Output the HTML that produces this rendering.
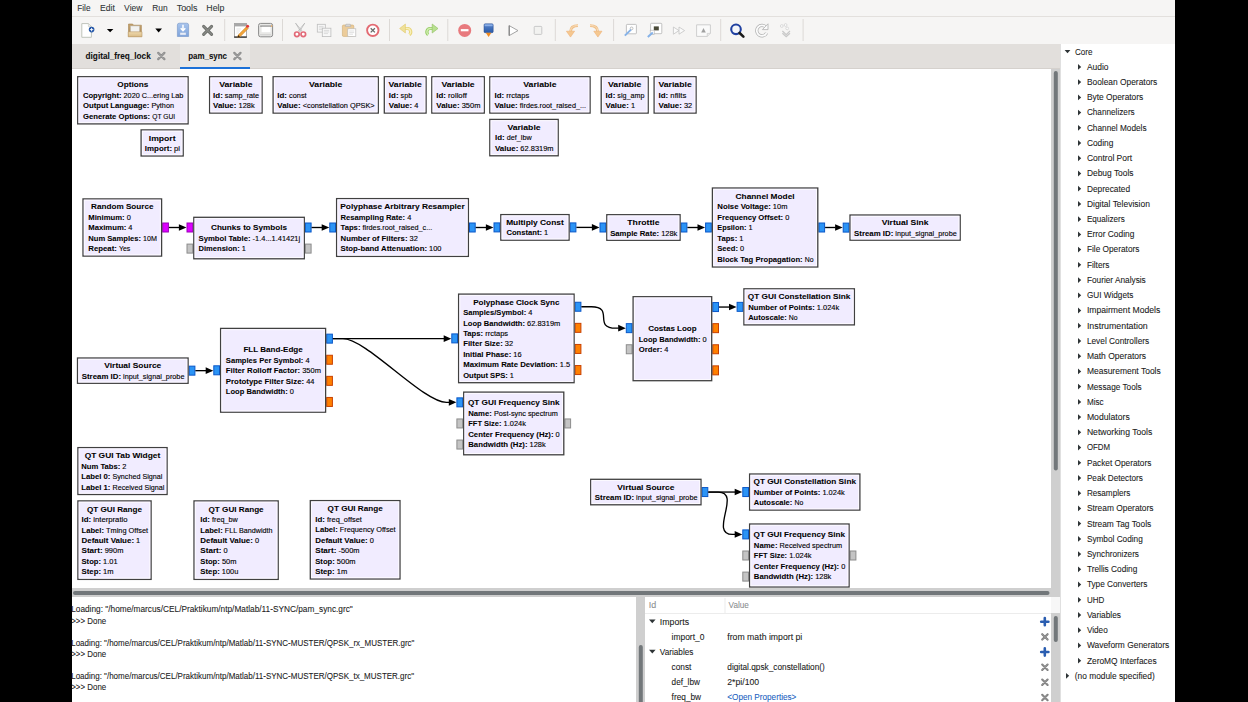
<!DOCTYPE html>
<html><head><meta charset="utf-8"><style>
html,body{margin:0;padding:0;background:#000;width:1248px;height:702px;overflow:hidden}
text{font-family:"Liberation Sans", sans-serif}
</style></head><body>
<svg width='1248' height='702' viewBox='0 0 1248 702' style='display:block;font-family:"Liberation Sans", sans-serif'>
<rect x='0' y='0' width='1248' height='702' fill='#000'/>
<rect x='72' y='0' width='1103' height='702' fill='#f6f5f4'/>
<rect x='72' y='16' width='1103' height='1' fill='#e3e0dd'/>
<text x='77.20' y='11.00' font-size='9.30' fill='#2e3436' textLength='13.27' lengthAdjust='spacingAndGlyphs' stroke='#2e3436' stroke-width='0.08'>File</text>
<text x='100.00' y='11.00' font-size='9.30' fill='#2e3436' textLength='14.86' lengthAdjust='spacingAndGlyphs' stroke='#2e3436' stroke-width='0.08'>Edit</text>
<text x='124.10' y='11.00' font-size='9.30' fill='#2e3436' textLength='18.33' lengthAdjust='spacingAndGlyphs' stroke='#2e3436' stroke-width='0.08'>View</text>
<text x='152.20' y='11.00' font-size='9.30' fill='#2e3436' textLength='15.42' lengthAdjust='spacingAndGlyphs' stroke='#2e3436' stroke-width='0.08'>Run</text>
<text x='176.70' y='11.00' font-size='9.30' fill='#2e3436' textLength='20.77' lengthAdjust='spacingAndGlyphs' stroke='#2e3436' stroke-width='0.08'>Tools</text>
<text x='206.30' y='11.00' font-size='9.30' fill='#2e3436' textLength='18.08' lengthAdjust='spacingAndGlyphs' stroke='#2e3436' stroke-width='0.08'>Help</text>
<rect x='224.2' y='19' width='1' height='22' fill='#dcd9d6'/>
<rect x='282.0' y='19' width='1' height='22' fill='#dcd9d6'/>
<rect x='389.0' y='19' width='1' height='22' fill='#dcd9d6'/>
<rect x='447.3' y='19' width='1' height='22' fill='#dcd9d6'/>
<rect x='554.8' y='19' width='1' height='22' fill='#dcd9d6'/>
<rect x='613.1' y='19' width='1' height='22' fill='#dcd9d6'/>
<rect x='720.2' y='19' width='1' height='22' fill='#dcd9d6'/>
<rect x='802.6' y='19' width='1' height='22' fill='#dcd9d6'/>
<rect x='72' y='44' width='989' height='25' fill='#e2dfdc'/>
<rect x='180' y='44' width='70' height='25' fill='#e9e7e5'/>
<rect x='72' y='68' width='989' height='1' fill='#d5d1cd'/>
<rect x='180' y='67' width='70' height='2' fill='#1c71d8'/>
<text x='85.60' y='59.00' font-size='8.96' font-weight='bold' fill='#101010' textLength='65.10' lengthAdjust='spacingAndGlyphs' stroke='#101010' stroke-width='0.08'>digital_freq_lock</text>
<text x='188.20' y='59.00' font-size='8.96' font-weight='bold' fill='#101010' textLength='38.85' lengthAdjust='spacingAndGlyphs' stroke='#101010' stroke-width='0.08'>pam_sync</text>
<path d='M158.2 52.9 L164.4 59.1 M164.4 52.9 L158.2 59.1' stroke='#8c8c8c' stroke-width='2.2' stroke-linecap='round'/>
<path d='M158.2 52.9 L164.4 59.1 M164.4 52.9 L158.2 59.1' stroke='#a8a8a8' stroke-width='0.8' stroke-linecap='round'/>
<path d='M234.3 52.9 L240.5 59.1 M240.5 52.9 L234.3 59.1' stroke='#8c8c8c' stroke-width='2.2' stroke-linecap='round'/>
<path d='M234.3 52.9 L240.5 59.1 M240.5 52.9 L234.3 59.1' stroke='#a8a8a8' stroke-width='0.8' stroke-linecap='round'/>
<rect x='72' y='69' width='979' height='519' fill='#fff'/>
<rect x='1051' y='69' width='10' height='528' fill='#cfcfcf'/>
<rect x='1053.8' y='71' width='4' height='399.5' rx='2' fill='#72777a'/>
<rect x='72' y='588' width='979' height='9' fill='#cfcfcf'/>
<rect x='73' y='591' width='976.5' height='4' rx='2' fill='#72777a'/>
<svg x='72' y='69' width='979' height='519' viewBox='72 69 979 519' overflow='hidden'><rect x='77.70' y='76.70' width='110.40' height='47.20' fill='#f1ecff' stroke='#404040' stroke-width='1.3'/>
<rect x='79.00' y='78.00' width='107.80' height='44.60' fill='none' stroke='#fdfbff' stroke-width='0.9'/>
<text x='132.90' y='87.00' font-size='7.50' font-weight='bold' text-anchor='middle' fill='#000' textLength='31.02' lengthAdjust='spacingAndGlyphs' stroke='#000' stroke-width='0.06'>Options</text>
<text x='82.96' y='98.00' font-size='7.15' font-weight='bold' fill='#000' textLength='38.55' lengthAdjust='spacingAndGlyphs' stroke='#000' stroke-width='0.06'>Copyright:</text>
<text x='123.57' y='98.00' font-size='7.15' fill='#000' textLength='59.86' lengthAdjust='spacingAndGlyphs' stroke='#000' stroke-width='0.12'>2020 C...ering Lab</text>
<text x='82.96' y='108.00' font-size='7.15' font-weight='bold' fill='#000' textLength='66.39' lengthAdjust='spacingAndGlyphs' stroke='#000' stroke-width='0.06'>Output Language:</text>
<text x='151.42' y='108.00' font-size='7.15' fill='#000' textLength='22.53' lengthAdjust='spacingAndGlyphs' stroke='#000' stroke-width='0.12'>Python</text>
<text x='82.96' y='119.00' font-size='7.15' font-weight='bold' fill='#000' textLength='67.22' lengthAdjust='spacingAndGlyphs' stroke='#000' stroke-width='0.06'>Generate Options:</text>
<text x='152.25' y='119.00' font-size='7.15' fill='#000' textLength='22.86' lengthAdjust='spacingAndGlyphs' stroke='#000' stroke-width='0.12'>QT GUI</text>
<rect x='209.60' y='76.70' width='52.50' height='36.40' fill='#f1ecff' stroke='#404040' stroke-width='1.3'/>
<rect x='210.90' y='78.00' width='49.90' height='33.80' fill='none' stroke='#fdfbff' stroke-width='0.9'/>
<text x='235.85' y='87.00' font-size='7.50' font-weight='bold' text-anchor='middle' fill='#000' textLength='33.25' lengthAdjust='spacingAndGlyphs' stroke='#000' stroke-width='0.06'>Variable</text>
<text x='213.14' y='98.00' font-size='7.15' font-weight='bold' fill='#000' textLength='9.67' lengthAdjust='spacingAndGlyphs' stroke='#000' stroke-width='0.06'>Id:</text>
<text x='224.88' y='98.00' font-size='7.15' fill='#000' textLength='34.28' lengthAdjust='spacingAndGlyphs' stroke='#000' stroke-width='0.12'>samp_rate</text>
<text x='213.14' y='108.00' font-size='7.15' font-weight='bold' fill='#000' textLength='23.28' lengthAdjust='spacingAndGlyphs' stroke='#000' stroke-width='0.06'>Value:</text>
<text x='238.49' y='108.00' font-size='7.15' fill='#000' textLength='16.17' lengthAdjust='spacingAndGlyphs' stroke='#000' stroke-width='0.12'>128k</text>
<rect x='273.10' y='76.70' width='105.20' height='36.40' fill='#f1ecff' stroke='#404040' stroke-width='1.3'/>
<rect x='274.40' y='78.00' width='102.60' height='33.80' fill='none' stroke='#fdfbff' stroke-width='0.9'/>
<text x='325.70' y='87.00' font-size='7.50' font-weight='bold' text-anchor='middle' fill='#000' textLength='33.25' lengthAdjust='spacingAndGlyphs' stroke='#000' stroke-width='0.06'>Variable</text>
<text x='277.31' y='98.00' font-size='7.15' font-weight='bold' fill='#000' textLength='9.67' lengthAdjust='spacingAndGlyphs' stroke='#000' stroke-width='0.06'>Id:</text>
<text x='289.05' y='98.00' font-size='7.15' fill='#000' textLength='17.61' lengthAdjust='spacingAndGlyphs' stroke='#000' stroke-width='0.12'>const</text>
<text x='277.31' y='108.00' font-size='7.15' font-weight='bold' fill='#000' textLength='23.28' lengthAdjust='spacingAndGlyphs' stroke='#000' stroke-width='0.06'>Value:</text>
<text x='302.66' y='108.00' font-size='7.15' fill='#000' textLength='72.03' lengthAdjust='spacingAndGlyphs' stroke='#000' stroke-width='0.12'>&lt;constellation QPSK&gt;</text>
<rect x='384.30' y='76.70' width='41.80' height='36.40' fill='#f1ecff' stroke='#404040' stroke-width='1.3'/>
<rect x='385.60' y='78.00' width='39.20' height='33.80' fill='none' stroke='#fdfbff' stroke-width='0.9'/>
<text x='405.20' y='87.00' font-size='7.50' font-weight='bold' text-anchor='middle' fill='#000' textLength='33.25' lengthAdjust='spacingAndGlyphs' stroke='#000' stroke-width='0.06'>Variable</text>
<text x='388.88' y='98.00' font-size='7.15' font-weight='bold' fill='#000' textLength='9.67' lengthAdjust='spacingAndGlyphs' stroke='#000' stroke-width='0.06'>Id:</text>
<text x='400.61' y='98.00' font-size='7.15' fill='#000' textLength='11.64' lengthAdjust='spacingAndGlyphs' stroke='#000' stroke-width='0.12'>spb</text>
<text x='388.88' y='108.00' font-size='7.15' font-weight='bold' fill='#000' textLength='23.28' lengthAdjust='spacingAndGlyphs' stroke='#000' stroke-width='0.06'>Value:</text>
<text x='414.22' y='108.00' font-size='7.15' fill='#000' textLength='4.14' lengthAdjust='spacingAndGlyphs' stroke='#000' stroke-width='0.12'>4</text>
<rect x='431.80' y='76.70' width='52.50' height='36.40' fill='#f1ecff' stroke='#404040' stroke-width='1.3'/>
<rect x='433.10' y='78.00' width='49.90' height='33.80' fill='none' stroke='#fdfbff' stroke-width='0.9'/>
<text x='458.05' y='87.00' font-size='7.50' font-weight='bold' text-anchor='middle' fill='#000' textLength='33.25' lengthAdjust='spacingAndGlyphs' stroke='#000' stroke-width='0.06'>Variable</text>
<text x='436.31' y='98.00' font-size='7.15' font-weight='bold' fill='#000' textLength='9.67' lengthAdjust='spacingAndGlyphs' stroke='#000' stroke-width='0.06'>Id:</text>
<text x='448.04' y='98.00' font-size='7.15' fill='#000' textLength='18.81' lengthAdjust='spacingAndGlyphs' stroke='#000' stroke-width='0.12'>rolloff</text>
<text x='436.31' y='108.00' font-size='7.15' font-weight='bold' fill='#000' textLength='23.28' lengthAdjust='spacingAndGlyphs' stroke='#000' stroke-width='0.06'>Value:</text>
<text x='461.65' y='108.00' font-size='7.15' fill='#000' textLength='18.74' lengthAdjust='spacingAndGlyphs' stroke='#000' stroke-width='0.12'>350m</text>
<rect x='489.80' y='76.70' width='100.30' height='36.40' fill='#f1ecff' stroke='#404040' stroke-width='1.3'/>
<rect x='491.10' y='78.00' width='97.70' height='33.80' fill='none' stroke='#fdfbff' stroke-width='0.9'/>
<text x='539.95' y='87.00' font-size='7.50' font-weight='bold' text-anchor='middle' fill='#000' textLength='33.25' lengthAdjust='spacingAndGlyphs' stroke='#000' stroke-width='0.06'>Variable</text>
<text x='494.48' y='98.00' font-size='7.15' font-weight='bold' fill='#000' textLength='9.67' lengthAdjust='spacingAndGlyphs' stroke='#000' stroke-width='0.06'>Id:</text>
<text x='506.22' y='98.00' font-size='7.15' fill='#000' textLength='22.96' lengthAdjust='spacingAndGlyphs' stroke='#000' stroke-width='0.12'>rrctaps</text>
<text x='494.48' y='108.00' font-size='7.15' font-weight='bold' fill='#000' textLength='23.28' lengthAdjust='spacingAndGlyphs' stroke='#000' stroke-width='0.06'>Value:</text>
<text x='519.83' y='108.00' font-size='7.15' fill='#000' textLength='66.19' lengthAdjust='spacingAndGlyphs' stroke='#000' stroke-width='0.12'>firdes.root_raised_...</text>
<rect x='601.20' y='76.70' width='47.00' height='36.40' fill='#f1ecff' stroke='#404040' stroke-width='1.3'/>
<rect x='602.50' y='78.00' width='44.40' height='33.80' fill='none' stroke='#fdfbff' stroke-width='0.9'/>
<text x='624.70' y='87.00' font-size='7.50' font-weight='bold' text-anchor='middle' fill='#000' textLength='33.25' lengthAdjust='spacingAndGlyphs' stroke='#000' stroke-width='0.06'>Variable</text>
<text x='605.63' y='98.00' font-size='7.15' font-weight='bold' fill='#000' textLength='9.67' lengthAdjust='spacingAndGlyphs' stroke='#000' stroke-width='0.06'>Id:</text>
<text x='617.36' y='98.00' font-size='7.15' fill='#000' textLength='27.01' lengthAdjust='spacingAndGlyphs' stroke='#000' stroke-width='0.12'>sig_amp</text>
<text x='605.63' y='108.00' font-size='7.15' font-weight='bold' fill='#000' textLength='23.28' lengthAdjust='spacingAndGlyphs' stroke='#000' stroke-width='0.06'>Value:</text>
<text x='630.97' y='108.00' font-size='7.15' fill='#000' textLength='4.14' lengthAdjust='spacingAndGlyphs' stroke='#000' stroke-width='0.12'>1</text>
<rect x='654.10' y='76.70' width='42.00' height='36.40' fill='#f1ecff' stroke='#404040' stroke-width='1.3'/>
<rect x='655.40' y='78.00' width='39.40' height='33.80' fill='none' stroke='#fdfbff' stroke-width='0.9'/>
<text x='675.10' y='87.00' font-size='7.50' font-weight='bold' text-anchor='middle' fill='#000' textLength='33.25' lengthAdjust='spacingAndGlyphs' stroke='#000' stroke-width='0.06'>Variable</text>
<text x='658.59' y='98.00' font-size='7.15' font-weight='bold' fill='#000' textLength='9.67' lengthAdjust='spacingAndGlyphs' stroke='#000' stroke-width='0.06'>Id:</text>
<text x='670.33' y='98.00' font-size='7.15' fill='#000' textLength='15.95' lengthAdjust='spacingAndGlyphs' stroke='#000' stroke-width='0.12'>nfilts</text>
<text x='658.59' y='108.00' font-size='7.15' font-weight='bold' fill='#000' textLength='23.28' lengthAdjust='spacingAndGlyphs' stroke='#000' stroke-width='0.06'>Value:</text>
<text x='683.94' y='108.00' font-size='7.15' fill='#000' textLength='8.27' lengthAdjust='spacingAndGlyphs' stroke='#000' stroke-width='0.12'>32</text>
<rect x='489.80' y='119.40' width='68.40' height='36.40' fill='#f1ecff' stroke='#404040' stroke-width='1.3'/>
<rect x='491.10' y='120.70' width='65.80' height='33.80' fill='none' stroke='#fdfbff' stroke-width='0.9'/>
<text x='524.00' y='130.00' font-size='7.50' font-weight='bold' text-anchor='middle' fill='#000' textLength='33.25' lengthAdjust='spacingAndGlyphs' stroke='#000' stroke-width='0.06'>Variable</text>
<text x='495.02' y='140.00' font-size='7.15' font-weight='bold' fill='#000' textLength='9.67' lengthAdjust='spacingAndGlyphs' stroke='#000' stroke-width='0.06'>Id:</text>
<text x='506.76' y='140.00' font-size='7.15' fill='#000' textLength='24.91' lengthAdjust='spacingAndGlyphs' stroke='#000' stroke-width='0.12'>def_lbw</text>
<text x='495.02' y='151.00' font-size='7.15' font-weight='bold' fill='#000' textLength='23.28' lengthAdjust='spacingAndGlyphs' stroke='#000' stroke-width='0.06'>Value:</text>
<text x='520.37' y='151.00' font-size='7.15' fill='#000' textLength='33.21' lengthAdjust='spacingAndGlyphs' stroke='#000' stroke-width='0.12'>62.8319m</text>
<rect x='141.10' y='129.90' width='42.10' height='26.10' fill='#f1ecff' stroke='#404040' stroke-width='1.3'/>
<rect x='142.40' y='131.20' width='39.50' height='23.50' fill='none' stroke='#fdfbff' stroke-width='0.9'/>
<text x='162.15' y='141.00' font-size='7.50' font-weight='bold' text-anchor='middle' fill='#000' textLength='26.82' lengthAdjust='spacingAndGlyphs' stroke='#000' stroke-width='0.06'>Import</text>
<text x='144.84' y='151.00' font-size='7.15' font-weight='bold' fill='#000' textLength='27.22' lengthAdjust='spacingAndGlyphs' stroke='#000' stroke-width='0.06'>Import:</text>
<text x='174.13' y='151.00' font-size='7.15' fill='#000' textLength='5.93' lengthAdjust='spacingAndGlyphs' stroke='#000' stroke-width='0.12'>pi</text>
<rect x='162.70' y='223.00' width='5.70' height='9.00' fill='#dd00ff' stroke='#9a00b8' stroke-width='1'/>
<rect x='83.00' y='198.90' width='78.60' height='57.20' fill='#f1ecff' stroke='#404040' stroke-width='1.3'/>
<rect x='84.30' y='200.20' width='76.00' height='54.60' fill='none' stroke='#fdfbff' stroke-width='0.9'/>
<text x='122.30' y='209.00' font-size='7.50' font-weight='bold' text-anchor='middle' fill='#000' textLength='62.54' lengthAdjust='spacingAndGlyphs' stroke='#000' stroke-width='0.06'>Random Source</text>
<text x='88.28' y='220.00' font-size='7.15' font-weight='bold' fill='#000' textLength='36.32' lengthAdjust='spacingAndGlyphs' stroke='#000' stroke-width='0.06'>Minimum:</text>
<text x='126.67' y='220.00' font-size='7.15' fill='#000' textLength='4.14' lengthAdjust='spacingAndGlyphs' stroke='#000' stroke-width='0.12'>0</text>
<text x='88.28' y='230.00' font-size='7.15' font-weight='bold' fill='#000' textLength='38.05' lengthAdjust='spacingAndGlyphs' stroke='#000' stroke-width='0.06'>Maximum:</text>
<text x='128.39' y='230.00' font-size='7.15' fill='#000' textLength='4.14' lengthAdjust='spacingAndGlyphs' stroke='#000' stroke-width='0.12'>4</text>
<text x='88.28' y='241.00' font-size='7.15' font-weight='bold' fill='#000' textLength='52.70' lengthAdjust='spacingAndGlyphs' stroke='#000' stroke-width='0.06'>Num Samples:</text>
<text x='143.04' y='241.00' font-size='7.15' fill='#000' textLength='13.88' lengthAdjust='spacingAndGlyphs' stroke='#000' stroke-width='0.12'>10M</text>
<text x='88.28' y='251.00' font-size='7.15' font-weight='bold' fill='#000' textLength='28.57' lengthAdjust='spacingAndGlyphs' stroke='#000' stroke-width='0.06'>Repeat:</text>
<text x='118.91' y='251.00' font-size='7.15' fill='#000' textLength='11.36' lengthAdjust='spacingAndGlyphs' stroke='#000' stroke-width='0.12'>Yes</text>
<rect x='187.00' y='223.00' width='5.70' height='9.00' fill='#dd00ff' stroke='#9a00b8' stroke-width='1'/>
<rect x='187.00' y='244.10' width='5.70' height='9.00' fill='#c4c4c4' stroke='#8c8c8c' stroke-width='1'/>
<rect x='305.40' y='223.00' width='5.70' height='9.00' fill='#2b94f5' stroke='#0b57c8' stroke-width='1'/>
<rect x='305.40' y='244.10' width='5.70' height='9.00' fill='#c4c4c4' stroke='#8c8c8c' stroke-width='1'/>
<rect x='193.80' y='217.30' width='110.50' height='41.50' fill='#f1ecff' stroke='#404040' stroke-width='1.3'/>
<rect x='195.10' y='218.60' width='107.90' height='38.90' fill='none' stroke='#fdfbff' stroke-width='0.9'/>
<text x='249.05' y='230.00' font-size='7.50' font-weight='bold' text-anchor='middle' fill='#000' textLength='76.08' lengthAdjust='spacingAndGlyphs' stroke='#000' stroke-width='0.06'>Chunks to Symbols</text>
<text x='198.53' y='241.00' font-size='7.15' font-weight='bold' fill='#000' textLength='52.01' lengthAdjust='spacingAndGlyphs' stroke='#000' stroke-width='0.06'>Symbol Table:</text>
<text x='252.60' y='241.00' font-size='7.15' fill='#000' textLength='47.57' lengthAdjust='spacingAndGlyphs' stroke='#000' stroke-width='0.12'>-1.4...1.41421j</text>
<text x='198.53' y='251.00' font-size='7.15' font-weight='bold' fill='#000' textLength='41.22' lengthAdjust='spacingAndGlyphs' stroke='#000' stroke-width='0.06'>Dimension:</text>
<text x='241.82' y='251.00' font-size='7.15' fill='#000' textLength='4.14' lengthAdjust='spacingAndGlyphs' stroke='#000' stroke-width='0.12'>1</text>
<rect x='329.80' y='223.00' width='5.70' height='9.00' fill='#2b94f5' stroke='#0b57c8' stroke-width='1'/>
<rect x='469.50' y='223.00' width='5.70' height='9.00' fill='#2b94f5' stroke='#0b57c8' stroke-width='1'/>
<rect x='336.60' y='198.60' width='131.80' height='57.80' fill='#f1ecff' stroke='#404040' stroke-width='1.3'/>
<rect x='337.90' y='199.90' width='129.20' height='55.20' fill='none' stroke='#fdfbff' stroke-width='0.9'/>
<text x='402.50' y='209.00' font-size='7.50' font-weight='bold' text-anchor='middle' fill='#000' textLength='124.56' lengthAdjust='spacingAndGlyphs' stroke='#000' stroke-width='0.06'>Polyphase Arbitrary Resampler</text>
<text x='340.52' y='220.00' font-size='7.15' font-weight='bold' fill='#000' textLength='64.60' lengthAdjust='spacingAndGlyphs' stroke='#000' stroke-width='0.06'>Resampling Rate:</text>
<text x='407.18' y='220.00' font-size='7.15' fill='#000' textLength='4.14' lengthAdjust='spacingAndGlyphs' stroke='#000' stroke-width='0.12'>4</text>
<text x='340.52' y='230.00' font-size='7.15' font-weight='bold' fill='#000' textLength='19.94' lengthAdjust='spacingAndGlyphs' stroke='#000' stroke-width='0.06'>Taps:</text>
<text x='362.53' y='230.00' font-size='7.15' fill='#000' textLength='69.76' lengthAdjust='spacingAndGlyphs' stroke='#000' stroke-width='0.12'>firdes.root_raised_c...</text>
<text x='340.52' y='241.00' font-size='7.15' font-weight='bold' fill='#000' textLength='67.01' lengthAdjust='spacingAndGlyphs' stroke='#000' stroke-width='0.06'>Number of Filters:</text>
<text x='409.60' y='241.00' font-size='7.15' fill='#000' textLength='8.27' lengthAdjust='spacingAndGlyphs' stroke='#000' stroke-width='0.12'>32</text>
<text x='340.52' y='251.00' font-size='7.15' font-weight='bold' fill='#000' textLength='86.51' lengthAdjust='spacingAndGlyphs' stroke='#000' stroke-width='0.06'>Stop-band Attenuation:</text>
<text x='429.09' y='251.00' font-size='7.15' fill='#000' textLength='12.41' lengthAdjust='spacingAndGlyphs' stroke='#000' stroke-width='0.12'>100</text>
<rect x='494.00' y='222.90' width='5.70' height='9.00' fill='#2b94f5' stroke='#0b57c8' stroke-width='1'/>
<rect x='570.20' y='222.90' width='5.70' height='9.00' fill='#2b94f5' stroke='#0b57c8' stroke-width='1'/>
<rect x='500.80' y='214.60' width='68.30' height='25.60' fill='#f1ecff' stroke='#404040' stroke-width='1.3'/>
<rect x='502.10' y='215.90' width='65.70' height='23.00' fill='none' stroke='#fdfbff' stroke-width='0.9'/>
<text x='534.95' y='225.00' font-size='7.50' font-weight='bold' text-anchor='middle' fill='#000' textLength='57.60' lengthAdjust='spacingAndGlyphs' stroke='#000' stroke-width='0.06'>Multiply Const</text>
<text x='506.45' y='235.00' font-size='7.15' font-weight='bold' fill='#000' textLength='35.56' lengthAdjust='spacingAndGlyphs' stroke='#000' stroke-width='0.06'>Constant:</text>
<text x='544.08' y='235.00' font-size='7.15' fill='#000' textLength='4.14' lengthAdjust='spacingAndGlyphs' stroke='#000' stroke-width='0.12'>1</text>
<rect x='600.00' y='223.00' width='5.70' height='9.00' fill='#2b94f5' stroke='#0b57c8' stroke-width='1'/>
<rect x='681.20' y='223.00' width='5.70' height='9.00' fill='#2b94f5' stroke='#0b57c8' stroke-width='1'/>
<rect x='606.80' y='214.70' width='73.30' height='25.60' fill='#f1ecff' stroke='#404040' stroke-width='1.3'/>
<rect x='608.10' y='216.00' width='70.70' height='23.00' fill='none' stroke='#fdfbff' stroke-width='0.9'/>
<text x='643.45' y='225.00' font-size='7.50' font-weight='bold' text-anchor='middle' fill='#000' textLength='32.22' lengthAdjust='spacingAndGlyphs' stroke='#000' stroke-width='0.06'>Throttle</text>
<text x='610.18' y='236.00' font-size='7.15' font-weight='bold' fill='#000' textLength='48.90' lengthAdjust='spacingAndGlyphs' stroke='#000' stroke-width='0.06'>Sample Rate:</text>
<text x='661.15' y='236.00' font-size='7.15' fill='#000' textLength='16.17' lengthAdjust='spacingAndGlyphs' stroke='#000' stroke-width='0.12'>128k</text>
<rect x='705.60' y='223.00' width='5.70' height='9.00' fill='#2b94f5' stroke='#0b57c8' stroke-width='1'/>
<rect x='818.90' y='223.00' width='5.70' height='9.00' fill='#2b94f5' stroke='#0b57c8' stroke-width='1'/>
<rect x='712.40' y='188.00' width='105.40' height='79.00' fill='#f1ecff' stroke='#404040' stroke-width='1.3'/>
<rect x='713.70' y='189.30' width='102.80' height='76.40' fill='none' stroke='#fdfbff' stroke-width='0.9'/>
<text x='765.10' y='199.00' font-size='7.50' font-weight='bold' text-anchor='middle' fill='#000' textLength='58.99' lengthAdjust='spacingAndGlyphs' stroke='#000' stroke-width='0.06'>Channel Model</text>
<text x='717.27' y='209.00' font-size='7.15' font-weight='bold' fill='#000' textLength='53.55' lengthAdjust='spacingAndGlyphs' stroke='#000' stroke-width='0.06'>Noise Voltage:</text>
<text x='772.88' y='209.00' font-size='7.15' fill='#000' textLength='14.60' lengthAdjust='spacingAndGlyphs' stroke='#000' stroke-width='0.12'>10m</text>
<text x='717.27' y='220.00' font-size='7.15' font-weight='bold' fill='#000' textLength='65.89' lengthAdjust='spacingAndGlyphs' stroke='#000' stroke-width='0.06'>Frequency Offset:</text>
<text x='785.22' y='220.00' font-size='7.15' fill='#000' textLength='4.14' lengthAdjust='spacingAndGlyphs' stroke='#000' stroke-width='0.12'>0</text>
<text x='717.27' y='230.00' font-size='7.15' font-weight='bold' fill='#000' textLength='29.11' lengthAdjust='spacingAndGlyphs' stroke='#000' stroke-width='0.06'>Epsilon:</text>
<text x='748.44' y='230.00' font-size='7.15' fill='#000' textLength='4.14' lengthAdjust='spacingAndGlyphs' stroke='#000' stroke-width='0.12'>1</text>
<text x='717.27' y='241.00' font-size='7.15' font-weight='bold' fill='#000' textLength='19.94' lengthAdjust='spacingAndGlyphs' stroke='#000' stroke-width='0.06'>Taps:</text>
<text x='739.27' y='241.00' font-size='7.15' fill='#000' textLength='4.14' lengthAdjust='spacingAndGlyphs' stroke='#000' stroke-width='0.12'>1</text>
<text x='717.27' y='251.00' font-size='7.15' font-weight='bold' fill='#000' textLength='20.75' lengthAdjust='spacingAndGlyphs' stroke='#000' stroke-width='0.06'>Seed:</text>
<text x='740.08' y='251.00' font-size='7.15' fill='#000' textLength='4.14' lengthAdjust='spacingAndGlyphs' stroke='#000' stroke-width='0.12'>0</text>
<text x='717.27' y='262.00' font-size='7.15' font-weight='bold' fill='#000' textLength='85.36' lengthAdjust='spacingAndGlyphs' stroke='#000' stroke-width='0.06'>Block Tag Propagation:</text>
<text x='804.70' y='262.00' font-size='7.15' fill='#000' textLength='8.84' lengthAdjust='spacingAndGlyphs' stroke='#000' stroke-width='0.12'>No</text>
<rect x='843.20' y='223.10' width='5.70' height='9.00' fill='#2b94f5' stroke='#0b57c8' stroke-width='1'/>
<rect x='850.00' y='215.00' width='110.20' height='25.20' fill='#f1ecff' stroke='#404040' stroke-width='1.3'/>
<rect x='851.30' y='216.30' width='107.60' height='22.60' fill='none' stroke='#fdfbff' stroke-width='0.9'/>
<text x='905.10' y='225.00' font-size='7.50' font-weight='bold' text-anchor='middle' fill='#000' textLength='46.77' lengthAdjust='spacingAndGlyphs' stroke='#000' stroke-width='0.06'>Virtual Sink</text>
<text x='854.07' y='236.00' font-size='7.15' font-weight='bold' fill='#000' textLength='39.24' lengthAdjust='spacingAndGlyphs' stroke='#000' stroke-width='0.06'>Stream ID:</text>
<text x='895.38' y='236.00' font-size='7.15' fill='#000' textLength='61.35' lengthAdjust='spacingAndGlyphs' stroke='#000' stroke-width='0.12'>input_signal_probe</text>
<rect x='189.20' y='366.15' width='5.70' height='9.00' fill='#2b94f5' stroke='#0b57c8' stroke-width='1'/>
<rect x='77.50' y='358.00' width='110.60' height='25.30' fill='#f1ecff' stroke='#404040' stroke-width='1.3'/>
<rect x='78.80' y='359.30' width='108.00' height='22.70' fill='none' stroke='#fdfbff' stroke-width='0.9'/>
<text x='132.80' y='368.00' font-size='7.50' font-weight='bold' text-anchor='middle' fill='#000' textLength='56.99' lengthAdjust='spacingAndGlyphs' stroke='#000' stroke-width='0.06'>Virtual Source</text>
<text x='81.77' y='379.00' font-size='7.15' font-weight='bold' fill='#000' textLength='39.24' lengthAdjust='spacingAndGlyphs' stroke='#000' stroke-width='0.06'>Stream ID:</text>
<text x='123.08' y='379.00' font-size='7.15' fill='#000' textLength='61.35' lengthAdjust='spacingAndGlyphs' stroke='#000' stroke-width='0.12'>input_signal_probe</text>
<rect x='213.80' y='365.80' width='5.70' height='9.00' fill='#2b94f5' stroke='#0b57c8' stroke-width='1'/>
<rect x='326.70' y='334.15' width='5.70' height='9.00' fill='#2b94f5' stroke='#0b57c8' stroke-width='1'/>
<rect x='326.70' y='355.25' width='5.70' height='9.00' fill='#ff8000' stroke='#c84000' stroke-width='1'/>
<rect x='326.70' y='376.35' width='5.70' height='9.00' fill='#ff8000' stroke='#c84000' stroke-width='1'/>
<rect x='326.70' y='397.45' width='5.70' height='9.00' fill='#ff8000' stroke='#c84000' stroke-width='1'/>
<rect x='220.60' y='328.40' width='105.00' height='83.80' fill='#f1ecff' stroke='#404040' stroke-width='1.3'/>
<rect x='221.90' y='329.70' width='102.40' height='81.20' fill='none' stroke='#fdfbff' stroke-width='0.9'/>
<text x='273.10' y='352.00' font-size='7.50' font-weight='bold' text-anchor='middle' fill='#000' textLength='59.32' lengthAdjust='spacingAndGlyphs' stroke='#000' stroke-width='0.06'>FLL Band-Edge</text>
<text x='225.87' y='363.00' font-size='7.15' font-weight='bold' fill='#000' textLength='77.54' lengthAdjust='spacingAndGlyphs' stroke='#000' stroke-width='0.06'>Samples Per Symbol:</text>
<text x='305.48' y='363.00' font-size='7.15' fill='#000' textLength='4.14' lengthAdjust='spacingAndGlyphs' stroke='#000' stroke-width='0.12'>4</text>
<text x='225.87' y='373.00' font-size='7.15' font-weight='bold' fill='#000' textLength='74.25' lengthAdjust='spacingAndGlyphs' stroke='#000' stroke-width='0.06'>Filter Rolloff Factor:</text>
<text x='302.19' y='373.00' font-size='7.15' fill='#000' textLength='18.74' lengthAdjust='spacingAndGlyphs' stroke='#000' stroke-width='0.12'>350m</text>
<text x='225.87' y='384.00' font-size='7.15' font-weight='bold' fill='#000' textLength='78.26' lengthAdjust='spacingAndGlyphs' stroke='#000' stroke-width='0.06'>Prototype Filter Size:</text>
<text x='306.20' y='384.00' font-size='7.15' fill='#000' textLength='8.27' lengthAdjust='spacingAndGlyphs' stroke='#000' stroke-width='0.12'>44</text>
<text x='225.87' y='394.00' font-size='7.15' font-weight='bold' fill='#000' textLength='61.83' lengthAdjust='spacingAndGlyphs' stroke='#000' stroke-width='0.06'>Loop Bandwidth:</text>
<text x='289.77' y='394.00' font-size='7.15' fill='#000' textLength='4.14' lengthAdjust='spacingAndGlyphs' stroke='#000' stroke-width='0.12'>0</text>
<rect x='451.80' y='333.90' width='5.70' height='9.00' fill='#2b94f5' stroke='#0b57c8' stroke-width='1'/>
<rect x='575.20' y='302.25' width='5.70' height='9.00' fill='#2b94f5' stroke='#0b57c8' stroke-width='1'/>
<rect x='575.20' y='323.35' width='5.70' height='9.00' fill='#ff8000' stroke='#c84000' stroke-width='1'/>
<rect x='575.20' y='344.45' width='5.70' height='9.00' fill='#ff8000' stroke='#c84000' stroke-width='1'/>
<rect x='575.20' y='365.55' width='5.70' height='9.00' fill='#ff8000' stroke='#c84000' stroke-width='1'/>
<rect x='458.60' y='294.10' width='115.50' height='88.60' fill='#f1ecff' stroke='#404040' stroke-width='1.3'/>
<rect x='459.90' y='295.40' width='112.90' height='86.00' fill='none' stroke='#fdfbff' stroke-width='0.9'/>
<text x='516.35' y='305.00' font-size='7.50' font-weight='bold' text-anchor='middle' fill='#000' textLength='86.27' lengthAdjust='spacingAndGlyphs' stroke='#000' stroke-width='0.06'>Polyphase Clock Sync</text>
<text x='463.17' y='315.00' font-size='7.15' font-weight='bold' fill='#000' textLength='63.01' lengthAdjust='spacingAndGlyphs' stroke='#000' stroke-width='0.06'>Samples/Symbol:</text>
<text x='528.24' y='315.00' font-size='7.15' fill='#000' textLength='4.14' lengthAdjust='spacingAndGlyphs' stroke='#000' stroke-width='0.12'>4</text>
<text x='463.17' y='326.00' font-size='7.15' font-weight='bold' fill='#000' textLength='61.83' lengthAdjust='spacingAndGlyphs' stroke='#000' stroke-width='0.06'>Loop Bandwidth:</text>
<text x='527.06' y='326.00' font-size='7.15' fill='#000' textLength='33.21' lengthAdjust='spacingAndGlyphs' stroke='#000' stroke-width='0.12'>62.8319m</text>
<text x='463.17' y='336.00' font-size='7.15' font-weight='bold' fill='#000' textLength='19.94' lengthAdjust='spacingAndGlyphs' stroke='#000' stroke-width='0.06'>Taps:</text>
<text x='485.17' y='336.00' font-size='7.15' fill='#000' textLength='22.96' lengthAdjust='spacingAndGlyphs' stroke='#000' stroke-width='0.12'>rrctaps</text>
<text x='463.17' y='346.00' font-size='7.15' font-weight='bold' fill='#000' textLength='39.58' lengthAdjust='spacingAndGlyphs' stroke='#000' stroke-width='0.06'>Filter Size:</text>
<text x='504.81' y='346.00' font-size='7.15' fill='#000' textLength='8.27' lengthAdjust='spacingAndGlyphs' stroke='#000' stroke-width='0.12'>32</text>
<text x='463.17' y='357.00' font-size='7.15' font-weight='bold' fill='#000' textLength='48.14' lengthAdjust='spacingAndGlyphs' stroke='#000' stroke-width='0.06'>Initial Phase:</text>
<text x='513.37' y='357.00' font-size='7.15' fill='#000' textLength='8.27' lengthAdjust='spacingAndGlyphs' stroke='#000' stroke-width='0.12'>16</text>
<text x='463.17' y='367.00' font-size='7.15' font-weight='bold' fill='#000' textLength='94.56' lengthAdjust='spacingAndGlyphs' stroke='#000' stroke-width='0.06'>Maximum Rate Deviation:</text>
<text x='559.80' y='367.00' font-size='7.15' fill='#000' textLength='10.34' lengthAdjust='spacingAndGlyphs' stroke='#000' stroke-width='0.12'>1.5</text>
<text x='463.17' y='378.00' font-size='7.15' font-weight='bold' fill='#000' textLength='44.64' lengthAdjust='spacingAndGlyphs' stroke='#000' stroke-width='0.06'>Output SPS:</text>
<text x='509.87' y='378.00' font-size='7.15' fill='#000' textLength='4.14' lengthAdjust='spacingAndGlyphs' stroke='#000' stroke-width='0.12'>1</text>
<rect x='626.30' y='323.65' width='5.70' height='9.00' fill='#2b94f5' stroke='#0b57c8' stroke-width='1'/>
<rect x='626.30' y='344.75' width='5.70' height='9.00' fill='#c4c4c4' stroke='#8c8c8c' stroke-width='1'/>
<rect x='712.80' y='302.55' width='5.70' height='9.00' fill='#2b94f5' stroke='#0b57c8' stroke-width='1'/>
<rect x='712.80' y='323.65' width='5.70' height='9.00' fill='#ff8000' stroke='#c84000' stroke-width='1'/>
<rect x='712.80' y='344.75' width='5.70' height='9.00' fill='#ff8000' stroke='#c84000' stroke-width='1'/>
<rect x='712.80' y='365.85' width='5.70' height='9.00' fill='#ff8000' stroke='#c84000' stroke-width='1'/>
<rect x='633.10' y='296.70' width='78.60' height='84.00' fill='#f1ecff' stroke='#404040' stroke-width='1.3'/>
<rect x='634.40' y='298.00' width='76.00' height='81.40' fill='none' stroke='#fdfbff' stroke-width='0.9'/>
<text x='672.40' y='331.00' font-size='7.50' font-weight='bold' text-anchor='middle' fill='#000' textLength='48.42' lengthAdjust='spacingAndGlyphs' stroke='#000' stroke-width='0.06'>Costas Loop</text>
<text x='638.68' y='342.00' font-size='7.15' font-weight='bold' fill='#000' textLength='61.83' lengthAdjust='spacingAndGlyphs' stroke='#000' stroke-width='0.06'>Loop Bandwidth:</text>
<text x='702.58' y='342.00' font-size='7.15' fill='#000' textLength='4.14' lengthAdjust='spacingAndGlyphs' stroke='#000' stroke-width='0.12'>0</text>
<text x='638.68' y='352.00' font-size='7.15' font-weight='bold' fill='#000' textLength='23.60' lengthAdjust='spacingAndGlyphs' stroke='#000' stroke-width='0.06'>Order:</text>
<text x='664.35' y='352.00' font-size='7.15' fill='#000' textLength='4.14' lengthAdjust='spacingAndGlyphs' stroke='#000' stroke-width='0.12'>4</text>
<rect x='737.10' y='302.35' width='5.70' height='9.00' fill='#2b94f5' stroke='#0b57c8' stroke-width='1'/>
<rect x='743.90' y='288.80' width='110.50' height='36.10' fill='#f1ecff' stroke='#404040' stroke-width='1.3'/>
<rect x='745.20' y='290.10' width='107.90' height='33.50' fill='none' stroke='#fdfbff' stroke-width='0.9'/>
<text x='799.15' y='299.00' font-size='7.50' font-weight='bold' text-anchor='middle' fill='#000' textLength='102.56' lengthAdjust='spacingAndGlyphs' stroke='#000' stroke-width='0.06'>QT GUI Constellation Sink</text>
<text x='748.17' y='310.00' font-size='7.15' font-weight='bold' fill='#000' textLength='66.59' lengthAdjust='spacingAndGlyphs' stroke='#000' stroke-width='0.06'>Number of Points:</text>
<text x='816.82' y='310.00' font-size='7.15' fill='#000' textLength='22.37' lengthAdjust='spacingAndGlyphs' stroke='#000' stroke-width='0.12'>1.024k</text>
<text x='748.17' y='320.00' font-size='7.15' font-weight='bold' fill='#000' textLength='38.57' lengthAdjust='spacingAndGlyphs' stroke='#000' stroke-width='0.06'>Autoscale:</text>
<text x='788.81' y='320.00' font-size='7.15' fill='#000' textLength='8.84' lengthAdjust='spacingAndGlyphs' stroke='#000' stroke-width='0.12'>No</text>
<rect x='456.90' y='397.85' width='5.70' height='9.00' fill='#2b94f5' stroke='#0b57c8' stroke-width='1'/>
<rect x='456.90' y='418.95' width='5.70' height='9.00' fill='#c4c4c4' stroke='#8c8c8c' stroke-width='1'/>
<rect x='456.90' y='440.05' width='5.70' height='9.00' fill='#c4c4c4' stroke='#8c8c8c' stroke-width='1'/>
<rect x='564.90' y='418.95' width='5.70' height='9.00' fill='#c4c4c4' stroke='#8c8c8c' stroke-width='1'/>
<rect x='463.70' y='392.10' width='100.10' height='62.70' fill='#f1ecff' stroke='#404040' stroke-width='1.3'/>
<rect x='465.00' y='393.40' width='97.50' height='60.10' fill='none' stroke='#fdfbff' stroke-width='0.9'/>
<text x='513.75' y='405.00' font-size='7.50' font-weight='bold' text-anchor='middle' fill='#000' textLength='91.60' lengthAdjust='spacingAndGlyphs' stroke='#000' stroke-width='0.06'>QT GUI Frequency Sink</text>
<text x='468.25' y='416.00' font-size='7.15' font-weight='bold' fill='#000' textLength='23.61' lengthAdjust='spacingAndGlyphs' stroke='#000' stroke-width='0.06'>Name:</text>
<text x='493.92' y='416.00' font-size='7.15' fill='#000' textLength='63.93' lengthAdjust='spacingAndGlyphs' stroke='#000' stroke-width='0.12'>Post-sync spectrum</text>
<text x='468.25' y='426.00' font-size='7.15' font-weight='bold' fill='#000' textLength='33.28' lengthAdjust='spacingAndGlyphs' stroke='#000' stroke-width='0.06'>FFT Size:</text>
<text x='503.59' y='426.00' font-size='7.15' fill='#000' textLength='22.37' lengthAdjust='spacingAndGlyphs' stroke='#000' stroke-width='0.12'>1.024k</text>
<text x='468.25' y='437.00' font-size='7.15' font-weight='bold' fill='#000' textLength='85.28' lengthAdjust='spacingAndGlyphs' stroke='#000' stroke-width='0.06'>Center Frequency (Hz):</text>
<text x='555.59' y='437.00' font-size='7.15' fill='#000' textLength='4.14' lengthAdjust='spacingAndGlyphs' stroke='#000' stroke-width='0.12'>0</text>
<text x='468.25' y='447.00' font-size='7.15' font-weight='bold' fill='#000' textLength='59.27' lengthAdjust='spacingAndGlyphs' stroke='#000' stroke-width='0.06'>Bandwidth (Hz):</text>
<text x='529.58' y='447.00' font-size='7.15' fill='#000' textLength='16.17' lengthAdjust='spacingAndGlyphs' stroke='#000' stroke-width='0.12'>128k</text>
<rect x='77.90' y='447.60' width='89.20' height='46.90' fill='#f1ecff' stroke='#404040' stroke-width='1.3'/>
<rect x='79.20' y='448.90' width='86.60' height='44.30' fill='none' stroke='#fdfbff' stroke-width='0.9'/>
<text x='122.50' y='458.00' font-size='7.50' font-weight='bold' text-anchor='middle' fill='#000' textLength='75.67' lengthAdjust='spacingAndGlyphs' stroke='#000' stroke-width='0.06'>QT GUI Tab Widget</text>
<text x='81.22' y='469.00' font-size='7.15' font-weight='bold' fill='#000' textLength='39.04' lengthAdjust='spacingAndGlyphs' stroke='#000' stroke-width='0.06'>Num Tabs:</text>
<text x='122.33' y='469.00' font-size='7.15' fill='#000' textLength='4.14' lengthAdjust='spacingAndGlyphs' stroke='#000' stroke-width='0.12'>2</text>
<text x='81.22' y='479.00' font-size='7.15' font-weight='bold' fill='#000' textLength='29.20' lengthAdjust='spacingAndGlyphs' stroke='#000' stroke-width='0.06'>Label 0:</text>
<text x='112.49' y='479.00' font-size='7.15' fill='#000' textLength='49.94' lengthAdjust='spacingAndGlyphs' stroke='#000' stroke-width='0.12'>Synched Signal</text>
<text x='81.22' y='490.00' font-size='7.15' font-weight='bold' fill='#000' textLength='29.20' lengthAdjust='spacingAndGlyphs' stroke='#000' stroke-width='0.06'>Label 1:</text>
<text x='112.49' y='490.00' font-size='7.15' fill='#000' textLength='51.90' lengthAdjust='spacingAndGlyphs' stroke='#000' stroke-width='0.12'>Received Signal</text>
<rect x='77.90' y='500.90' width='73.20' height='78.50' fill='#f1ecff' stroke='#404040' stroke-width='1.3'/>
<rect x='79.20' y='502.20' width='70.60' height='75.90' fill='none' stroke='#fdfbff' stroke-width='0.9'/>
<text x='114.50' y='512.00' font-size='7.50' font-weight='bold' text-anchor='middle' fill='#000' textLength='55.11' lengthAdjust='spacingAndGlyphs' stroke='#000' stroke-width='0.06'>QT GUI Range</text>
<text x='81.54' y='522.00' font-size='7.15' font-weight='bold' fill='#000' textLength='9.67' lengthAdjust='spacingAndGlyphs' stroke='#000' stroke-width='0.06'>Id:</text>
<text x='93.27' y='522.00' font-size='7.15' fill='#000' textLength='34.26' lengthAdjust='spacingAndGlyphs' stroke='#000' stroke-width='0.12'>interpratio</text>
<text x='81.54' y='533.00' font-size='7.15' font-weight='bold' fill='#000' textLength='22.42' lengthAdjust='spacingAndGlyphs' stroke='#000' stroke-width='0.06'>Label:</text>
<text x='106.02' y='533.00' font-size='7.15' fill='#000' textLength='42.05' lengthAdjust='spacingAndGlyphs' stroke='#000' stroke-width='0.12'>Tming Offset</text>
<text x='81.54' y='543.00' font-size='7.15' font-weight='bold' fill='#000' textLength='52.52' lengthAdjust='spacingAndGlyphs' stroke='#000' stroke-width='0.06'>Default Value:</text>
<text x='136.12' y='543.00' font-size='7.15' fill='#000' textLength='4.14' lengthAdjust='spacingAndGlyphs' stroke='#000' stroke-width='0.12'>1</text>
<text x='81.54' y='553.00' font-size='7.15' font-weight='bold' fill='#000' textLength='21.09' lengthAdjust='spacingAndGlyphs' stroke='#000' stroke-width='0.06'>Start:</text>
<text x='104.69' y='553.00' font-size='7.15' fill='#000' textLength='18.74' lengthAdjust='spacingAndGlyphs' stroke='#000' stroke-width='0.12'>990m</text>
<text x='81.54' y='564.00' font-size='7.15' font-weight='bold' fill='#000' textLength='19.51' lengthAdjust='spacingAndGlyphs' stroke='#000' stroke-width='0.06'>Stop:</text>
<text x='103.11' y='564.00' font-size='7.15' fill='#000' textLength='14.47' lengthAdjust='spacingAndGlyphs' stroke='#000' stroke-width='0.12'>1.01</text>
<text x='81.54' y='574.00' font-size='7.15' font-weight='bold' fill='#000' textLength='19.45' lengthAdjust='spacingAndGlyphs' stroke='#000' stroke-width='0.06'>Step:</text>
<text x='103.05' y='574.00' font-size='7.15' fill='#000' textLength='10.47' lengthAdjust='spacingAndGlyphs' stroke='#000' stroke-width='0.12'>1m</text>
<rect x='194.00' y='500.90' width='84.20' height='78.50' fill='#f1ecff' stroke='#404040' stroke-width='1.3'/>
<rect x='195.30' y='502.20' width='81.60' height='75.90' fill='none' stroke='#fdfbff' stroke-width='0.9'/>
<text x='236.10' y='512.00' font-size='7.50' font-weight='bold' text-anchor='middle' fill='#000' textLength='55.11' lengthAdjust='spacingAndGlyphs' stroke='#000' stroke-width='0.06'>QT GUI Range</text>
<text x='200.33' y='522.00' font-size='7.15' font-weight='bold' fill='#000' textLength='9.67' lengthAdjust='spacingAndGlyphs' stroke='#000' stroke-width='0.06'>Id:</text>
<text x='212.07' y='522.00' font-size='7.15' fill='#000' textLength='25.78' lengthAdjust='spacingAndGlyphs' stroke='#000' stroke-width='0.12'>freq_bw</text>
<text x='200.33' y='533.00' font-size='7.15' font-weight='bold' fill='#000' textLength='22.42' lengthAdjust='spacingAndGlyphs' stroke='#000' stroke-width='0.06'>Label:</text>
<text x='224.82' y='533.00' font-size='7.15' fill='#000' textLength='47.65' lengthAdjust='spacingAndGlyphs' stroke='#000' stroke-width='0.12'>FLL Bandwidth</text>
<text x='200.33' y='543.00' font-size='7.15' font-weight='bold' fill='#000' textLength='52.52' lengthAdjust='spacingAndGlyphs' stroke='#000' stroke-width='0.06'>Default Value:</text>
<text x='254.92' y='543.00' font-size='7.15' fill='#000' textLength='4.14' lengthAdjust='spacingAndGlyphs' stroke='#000' stroke-width='0.12'>0</text>
<text x='200.33' y='553.00' font-size='7.15' font-weight='bold' fill='#000' textLength='21.09' lengthAdjust='spacingAndGlyphs' stroke='#000' stroke-width='0.06'>Start:</text>
<text x='223.49' y='553.00' font-size='7.15' fill='#000' textLength='4.14' lengthAdjust='spacingAndGlyphs' stroke='#000' stroke-width='0.12'>0</text>
<text x='200.33' y='564.00' font-size='7.15' font-weight='bold' fill='#000' textLength='19.51' lengthAdjust='spacingAndGlyphs' stroke='#000' stroke-width='0.06'>Stop:</text>
<text x='221.91' y='564.00' font-size='7.15' fill='#000' textLength='14.60' lengthAdjust='spacingAndGlyphs' stroke='#000' stroke-width='0.12'>50m</text>
<text x='200.33' y='574.00' font-size='7.15' font-weight='bold' fill='#000' textLength='19.45' lengthAdjust='spacingAndGlyphs' stroke='#000' stroke-width='0.06'>Step:</text>
<text x='221.85' y='574.00' font-size='7.15' fill='#000' textLength='16.53' lengthAdjust='spacingAndGlyphs' stroke='#000' stroke-width='0.12'>100u</text>
<rect x='310.30' y='500.60' width='89.70' height='78.40' fill='#f1ecff' stroke='#404040' stroke-width='1.3'/>
<rect x='311.60' y='501.90' width='87.10' height='75.80' fill='none' stroke='#fdfbff' stroke-width='0.9'/>
<text x='355.15' y='511.00' font-size='7.50' font-weight='bold' text-anchor='middle' fill='#000' textLength='55.11' lengthAdjust='spacingAndGlyphs' stroke='#000' stroke-width='0.06'>QT GUI Range</text>
<text x='315.26' y='522.00' font-size='7.15' font-weight='bold' fill='#000' textLength='9.67' lengthAdjust='spacingAndGlyphs' stroke='#000' stroke-width='0.06'>Id:</text>
<text x='327.00' y='522.00' font-size='7.15' fill='#000' textLength='34.82' lengthAdjust='spacingAndGlyphs' stroke='#000' stroke-width='0.12'>freq_offset</text>
<text x='315.26' y='532.00' font-size='7.15' font-weight='bold' fill='#000' textLength='22.42' lengthAdjust='spacingAndGlyphs' stroke='#000' stroke-width='0.06'>Label:</text>
<text x='339.75' y='532.00' font-size='7.15' fill='#000' textLength='55.89' lengthAdjust='spacingAndGlyphs' stroke='#000' stroke-width='0.12'>Frequency Offset</text>
<text x='315.26' y='543.00' font-size='7.15' font-weight='bold' fill='#000' textLength='52.52' lengthAdjust='spacingAndGlyphs' stroke='#000' stroke-width='0.06'>Default Value:</text>
<text x='369.85' y='543.00' font-size='7.15' fill='#000' textLength='4.14' lengthAdjust='spacingAndGlyphs' stroke='#000' stroke-width='0.12'>0</text>
<text x='315.26' y='553.00' font-size='7.15' font-weight='bold' fill='#000' textLength='21.09' lengthAdjust='spacingAndGlyphs' stroke='#000' stroke-width='0.06'>Start:</text>
<text x='338.42' y='553.00' font-size='7.15' fill='#000' textLength='21.08' lengthAdjust='spacingAndGlyphs' stroke='#000' stroke-width='0.12'>-500m</text>
<text x='315.26' y='564.00' font-size='7.15' font-weight='bold' fill='#000' textLength='19.51' lengthAdjust='spacingAndGlyphs' stroke='#000' stroke-width='0.06'>Stop:</text>
<text x='336.84' y='564.00' font-size='7.15' fill='#000' textLength='18.74' lengthAdjust='spacingAndGlyphs' stroke='#000' stroke-width='0.12'>500m</text>
<text x='315.26' y='574.00' font-size='7.15' font-weight='bold' fill='#000' textLength='19.45' lengthAdjust='spacingAndGlyphs' stroke='#000' stroke-width='0.06'>Step:</text>
<text x='336.78' y='574.00' font-size='7.15' fill='#000' textLength='10.47' lengthAdjust='spacingAndGlyphs' stroke='#000' stroke-width='0.12'>1m</text>
<rect x='702.10' y='487.55' width='5.70' height='9.00' fill='#2b94f5' stroke='#0b57c8' stroke-width='1'/>
<rect x='590.70' y='479.30' width='110.30' height='25.50' fill='#f1ecff' stroke='#404040' stroke-width='1.3'/>
<rect x='592.00' y='480.60' width='107.70' height='22.90' fill='none' stroke='#fdfbff' stroke-width='0.9'/>
<text x='645.85' y='490.00' font-size='7.50' font-weight='bold' text-anchor='middle' fill='#000' textLength='56.99' lengthAdjust='spacingAndGlyphs' stroke='#000' stroke-width='0.06'>Virtual Source</text>
<text x='594.82' y='500.00' font-size='7.15' font-weight='bold' fill='#000' textLength='39.24' lengthAdjust='spacingAndGlyphs' stroke='#000' stroke-width='0.06'>Stream ID:</text>
<text x='636.13' y='500.00' font-size='7.15' fill='#000' textLength='61.35' lengthAdjust='spacingAndGlyphs' stroke='#000' stroke-width='0.12'>input_signal_probe</text>
<rect x='742.80' y='487.55' width='5.70' height='9.00' fill='#2b94f5' stroke='#0b57c8' stroke-width='1'/>
<rect x='749.60' y='474.00' width='110.30' height='36.10' fill='#f1ecff' stroke='#404040' stroke-width='1.3'/>
<rect x='750.90' y='475.30' width='107.70' height='33.50' fill='none' stroke='#fdfbff' stroke-width='0.9'/>
<text x='804.75' y='484.00' font-size='7.50' font-weight='bold' text-anchor='middle' fill='#000' textLength='102.56' lengthAdjust='spacingAndGlyphs' stroke='#000' stroke-width='0.06'>QT GUI Constellation Sink</text>
<text x='753.77' y='495.00' font-size='7.15' font-weight='bold' fill='#000' textLength='66.59' lengthAdjust='spacingAndGlyphs' stroke='#000' stroke-width='0.06'>Number of Points:</text>
<text x='822.42' y='495.00' font-size='7.15' fill='#000' textLength='22.37' lengthAdjust='spacingAndGlyphs' stroke='#000' stroke-width='0.12'>1.024k</text>
<text x='753.77' y='505.00' font-size='7.15' font-weight='bold' fill='#000' textLength='38.57' lengthAdjust='spacingAndGlyphs' stroke='#000' stroke-width='0.06'>Autoscale:</text>
<text x='794.41' y='505.00' font-size='7.15' fill='#000' textLength='8.84' lengthAdjust='spacingAndGlyphs' stroke='#000' stroke-width='0.12'>No</text>
<rect x='742.80' y='529.90' width='5.70' height='9.00' fill='#2b94f5' stroke='#0b57c8' stroke-width='1'/>
<rect x='742.80' y='551.00' width='5.70' height='9.00' fill='#c4c4c4' stroke='#8c8c8c' stroke-width='1'/>
<rect x='742.80' y='572.10' width='5.70' height='9.00' fill='#c4c4c4' stroke='#8c8c8c' stroke-width='1'/>
<rect x='850.20' y='551.00' width='5.70' height='9.00' fill='#c4c4c4' stroke='#8c8c8c' stroke-width='1'/>
<rect x='749.60' y='524.00' width='99.50' height='63.00' fill='#f1ecff' stroke='#404040' stroke-width='1.3'/>
<rect x='750.90' y='525.30' width='96.90' height='60.40' fill='none' stroke='#fdfbff' stroke-width='0.9'/>
<text x='799.35' y='537.00' font-size='7.50' font-weight='bold' text-anchor='middle' fill='#000' textLength='91.60' lengthAdjust='spacingAndGlyphs' stroke='#000' stroke-width='0.06'>QT GUI Frequency Sink</text>
<text x='753.85' y='548.00' font-size='7.15' font-weight='bold' fill='#000' textLength='23.61' lengthAdjust='spacingAndGlyphs' stroke='#000' stroke-width='0.06'>Name:</text>
<text x='779.52' y='548.00' font-size='7.15' fill='#000' textLength='62.69' lengthAdjust='spacingAndGlyphs' stroke='#000' stroke-width='0.12'>Received spectrum</text>
<text x='753.85' y='558.00' font-size='7.15' font-weight='bold' fill='#000' textLength='33.28' lengthAdjust='spacingAndGlyphs' stroke='#000' stroke-width='0.06'>FFT Size:</text>
<text x='789.19' y='558.00' font-size='7.15' fill='#000' textLength='22.37' lengthAdjust='spacingAndGlyphs' stroke='#000' stroke-width='0.12'>1.024k</text>
<text x='753.85' y='569.00' font-size='7.15' font-weight='bold' fill='#000' textLength='85.28' lengthAdjust='spacingAndGlyphs' stroke='#000' stroke-width='0.06'>Center Frequency (Hz):</text>
<text x='841.19' y='569.00' font-size='7.15' fill='#000' textLength='4.14' lengthAdjust='spacingAndGlyphs' stroke='#000' stroke-width='0.12'>0</text>
<text x='753.85' y='579.00' font-size='7.15' font-weight='bold' fill='#000' textLength='59.27' lengthAdjust='spacingAndGlyphs' stroke='#000' stroke-width='0.06'>Bandwidth (Hz):</text>
<text x='815.18' y='579.00' font-size='7.15' fill='#000' textLength='16.17' lengthAdjust='spacingAndGlyphs' stroke='#000' stroke-width='0.12'>128k</text>
<path d='M168.90 227.50 H179.40' stroke='#000' stroke-width='1.35' fill='none'/>
<path d='M186.50 227.50 L178.90 224.20 L178.90 230.80 Z' fill='#000'/>
<path d='M311.60 227.50 H322.20' stroke='#000' stroke-width='1.35' fill='none'/>
<path d='M329.30 227.50 L321.70 224.20 L321.70 230.80 Z' fill='#000'/>
<path d='M475.70 227.50 H486.40' stroke='#000' stroke-width='1.35' fill='none'/>
<path d='M493.50 227.50 L485.90 224.20 L485.90 230.80 Z' fill='#000'/>
<path d='M576.40 227.40 H592.40' stroke='#000' stroke-width='1.35' fill='none'/>
<path d='M599.50 227.40 L591.90 224.10 L591.90 230.70 Z' fill='#000'/>
<path d='M687.40 227.50 H698.00' stroke='#000' stroke-width='1.35' fill='none'/>
<path d='M705.10 227.50 L697.50 224.20 L697.50 230.80 Z' fill='#000'/>
<path d='M825.10 227.50 H835.60' stroke='#000' stroke-width='1.35' fill='none'/>
<path d='M842.70 227.50 L835.10 224.20 L835.10 230.80 Z' fill='#000'/>
<path d='M195.40 370.65 H206.20' stroke='#000' stroke-width='1.35' fill='none'/>
<path d='M213.30 370.65 L205.70 367.35 L205.70 373.95 Z' fill='#000'/>
<path d='M332.90 338.65 H444.20' stroke='#000' stroke-width='1.35' fill='none'/>
<path d='M451.30 338.65 L443.70 335.35 L443.70 341.95 Z' fill='#000'/>
<path d='M332.90 338.65 H342.90 C366.40 338.65 422.90 402.35 446.40 402.35 H449.30' stroke='#000' stroke-width='1.35' fill='none'/>
<path d='M456.40 402.35 L448.80 399.05 L448.80 405.65 Z' fill='#000'/>
<path d='M581.40 306.75 H591.40 C614.90 306.75 592.30 328.15 615.80 328.15 H618.70' stroke='#000' stroke-width='1.35' fill='none'/>
<path d='M625.80 328.15 L618.20 324.85 L618.20 331.45 Z' fill='#000'/>
<path d='M719.00 307.05 H729.50' stroke='#000' stroke-width='1.35' fill='none'/>
<path d='M736.60 307.05 L729.00 303.75 L729.00 310.35 Z' fill='#000'/>
<path d='M708.30 492.05 H735.20' stroke='#000' stroke-width='1.35' fill='none'/>
<path d='M742.30 492.05 L734.70 488.75 L734.70 495.35 Z' fill='#000'/>
<path d='M708.30 492.05 H718.30 C741.80 492.05 708.80 534.40 732.30 534.40 H735.20' stroke='#000' stroke-width='1.35' fill='none'/>
<path d='M742.30 534.40 L734.70 531.10 L734.70 537.70 Z' fill='#000'/></svg>
<rect x='72' y='597' width='564' height='105' fill='#fff'/>
<text x='71.20' y='612.00' font-size='8.74' fill='#1a1a1a' textLength='281.60' lengthAdjust='spacingAndGlyphs' stroke='#1a1a1a' stroke-width='0.08'>Loading: "/home/marcus/CEL/Praktikum/ntp/Matlab/11-SYNC/pam_sync.grc"</text>
<text x='71.20' y='624.00' font-size='8.74' fill='#1a1a1a' textLength='35.05' lengthAdjust='spacingAndGlyphs' stroke='#1a1a1a' stroke-width='0.08'>&gt;&gt;&gt; Done</text>
<text x='71.20' y='646.00' font-size='8.74' fill='#1a1a1a' textLength='343.27' lengthAdjust='spacingAndGlyphs' stroke='#1a1a1a' stroke-width='0.08'>Loading: "/home/marcus/CEL/Praktikum/ntp/Matlab/11-SYNC-MUSTER/QPSK_rx_MUSTER.grc"</text>
<text x='71.20' y='657.00' font-size='8.74' fill='#1a1a1a' textLength='35.05' lengthAdjust='spacingAndGlyphs' stroke='#1a1a1a' stroke-width='0.08'>&gt;&gt;&gt; Done</text>
<text x='71.20' y='679.00' font-size='8.74' fill='#1a1a1a' textLength='342.86' lengthAdjust='spacingAndGlyphs' stroke='#1a1a1a' stroke-width='0.08'>Loading: "/home/marcus/CEL/Praktikum/ntp/Matlab/11-SYNC-MUSTER/QPSK_tx_MUSTER.grc"</text>
<text x='71.20' y='690.00' font-size='8.74' fill='#1a1a1a' textLength='35.05' lengthAdjust='spacingAndGlyphs' stroke='#1a1a1a' stroke-width='0.08'>&gt;&gt;&gt; Done</text>
<rect x='636' y='597' width='9' height='105' fill='#cfcfcf'/>
<rect x='638.8' y='645' width='4' height='60' rx='2' fill='#72777a'/>
<rect x='645' y='597' width='406' height='105' fill='#fff'/>
<rect x='645' y='613' width='406' height='1' fill='#ececec'/>
<rect x='724.5' y='598' width='1' height='15' fill='#ececec'/>
<text x='648.80' y='608.00' font-size='8.74' fill='#8b8e8f' textLength='7.44' lengthAdjust='spacingAndGlyphs' stroke='#8b8e8f' stroke-width='0.08'>Id</text>
<text x='728.60' y='608.00' font-size='8.74' fill='#8b8e8f' textLength='20.29' lengthAdjust='spacingAndGlyphs' stroke='#8b8e8f' stroke-width='0.08'>Value</text>
<rect x='1051' y='613' width='9' height='89' fill='#cfcfcf'/>
<rect x='1051' y='597' width='9' height='16' fill='#f7f7f7'/>
<rect x='1053.8' y='616' width='4' height='26' rx='2' fill='#72777a'/>
<path d='M649 619.5 L655.6 619.5 L652.3 623.3 Z' fill='#2e3436'/>
<text x='659.80' y='625.00' font-size='8.74' fill='#1a1a1a' textLength='29.23' lengthAdjust='spacingAndGlyphs' stroke='#1a1a1a' stroke-width='0.08'>Imports</text>
<path d='M1044.8 618.1 V625.3 M1041.2 621.7 H1048.4' stroke='#2a5db0' stroke-width='2.6' stroke-linecap='round'/>
<text x='671.60' y='640.00' font-size='8.74' fill='#1a1a1a' textLength='32.78' lengthAdjust='spacingAndGlyphs' stroke='#1a1a1a' stroke-width='0.08'>import_0</text>
<text x='727.30' y='640.00' font-size='8.74' fill='#1a1a1a' textLength='74.97' lengthAdjust='spacingAndGlyphs' stroke='#1a1a1a' stroke-width='0.08'>from math import pi</text>
<path d='M1042.2 634.2 L1047.6 639.6 M1047.6 634.2 L1042.2 639.6' stroke='#7c7c7c' stroke-width='2.1' stroke-linecap='round'/>
<path d='M1042.2 634.2 L1047.6 639.6 M1047.6 634.2 L1042.2 639.6' stroke='#a0a0a0' stroke-width='0.7' stroke-linecap='round'/>
<path d='M649 649.8 L655.6 649.8 L652.3 653.6 Z' fill='#2e3436'/>
<text x='659.80' y='655.00' font-size='8.74' fill='#1a1a1a' textLength='33.61' lengthAdjust='spacingAndGlyphs' stroke='#1a1a1a' stroke-width='0.08'>Variables</text>
<path d='M1044.8 648.4 V655.6 M1041.2 652.0 H1048.4' stroke='#2a5db0' stroke-width='2.6' stroke-linecap='round'/>
<text x='671.60' y='670.00' font-size='8.74' fill='#1a1a1a' textLength='19.84' lengthAdjust='spacingAndGlyphs' stroke='#1a1a1a' stroke-width='0.08'>const</text>
<text x='727.30' y='670.00' font-size='8.74' fill='#1a1a1a' textLength='97.55' lengthAdjust='spacingAndGlyphs' stroke='#1a1a1a' stroke-width='0.08'>digital.qpsk_constellation()</text>
<path d='M1042.2 664.5 L1047.6 669.9 M1047.6 664.5 L1042.2 669.9' stroke='#7c7c7c' stroke-width='2.1' stroke-linecap='round'/>
<path d='M1042.2 664.5 L1047.6 669.9 M1047.6 664.5 L1042.2 669.9' stroke='#a0a0a0' stroke-width='0.7' stroke-linecap='round'/>
<text x='671.60' y='685.00' font-size='8.74' fill='#1a1a1a' textLength='28.28' lengthAdjust='spacingAndGlyphs' stroke='#1a1a1a' stroke-width='0.08'>def_lbw</text>
<text x='727.30' y='685.00' font-size='8.74' fill='#1a1a1a' textLength='31.86' lengthAdjust='spacingAndGlyphs' stroke='#1a1a1a' stroke-width='0.08'>2*pi/100</text>
<path d='M1042.2 679.6 L1047.6 685.0 M1047.6 679.6 L1042.2 685.0' stroke='#7c7c7c' stroke-width='2.1' stroke-linecap='round'/>
<path d='M1042.2 679.6 L1047.6 685.0 M1047.6 679.6 L1042.2 685.0' stroke='#a0a0a0' stroke-width='0.7' stroke-linecap='round'/>
<text x='671.60' y='700.00' font-size='8.74' fill='#1a1a1a' textLength='29.49' lengthAdjust='spacingAndGlyphs' stroke='#1a1a1a' stroke-width='0.08'>freq_bw</text>
<text x='727.30' y='700.00' font-size='8.74' fill='#1b5fbf' textLength='69.10' lengthAdjust='spacingAndGlyphs' stroke='#1b5fbf' stroke-width='0.08'>&lt;Open Properties&gt;</text>
<path d='M1042.2 694.8 L1047.6 700.2 M1047.6 694.8 L1042.2 700.2' stroke='#7c7c7c' stroke-width='2.1' stroke-linecap='round'/>
<path d='M1042.2 694.8 L1047.6 700.2 M1047.6 694.8 L1042.2 700.2' stroke='#a0a0a0' stroke-width='0.7' stroke-linecap='round'/>
<rect x='1061' y='44' width='114' height='658' fill='#fff'/>
<rect x='1060' y='44' width='1' height='658' fill='#e0e0e0'/>
<path d='M1064.6 49.9 L1070.4 49.9 L1067.5 53.3 Z' fill='#2e3436'/>
<text x='1075.00' y='55.00' font-size='8.85' fill='#1a1a1a' textLength='17.49' lengthAdjust='spacingAndGlyphs' stroke='#1a1a1a' stroke-width='0.08'>Core</text>
<path d='M1078 64.0 L1081.2 66.9 L1078 69.8 Z' fill='#2e3436'/>
<text x='1086.90' y='70.00' font-size='8.85' fill='#1a1a1a' textLength='21.61' lengthAdjust='spacingAndGlyphs' stroke='#1a1a1a' stroke-width='0.08'>Audio</text>
<path d='M1078 79.2 L1081.2 82.1 L1078 85.0 Z' fill='#2e3436'/>
<text x='1086.90' y='85.00' font-size='8.85' fill='#1a1a1a' textLength='70.41' lengthAdjust='spacingAndGlyphs' stroke='#1a1a1a' stroke-width='0.08'>Boolean Operators</text>
<path d='M1078 94.5 L1081.2 97.4 L1078 100.3 Z' fill='#2e3436'/>
<text x='1086.90' y='100.00' font-size='8.85' fill='#1a1a1a' textLength='56.38' lengthAdjust='spacingAndGlyphs' stroke='#1a1a1a' stroke-width='0.08'>Byte Operators</text>
<path d='M1078 109.7 L1081.2 112.6 L1078 115.5 Z' fill='#2e3436'/>
<text x='1086.90' y='115.00' font-size='8.85' fill='#1a1a1a' textLength='47.82' lengthAdjust='spacingAndGlyphs' stroke='#1a1a1a' stroke-width='0.08'>Channelizers</text>
<path d='M1078 124.9 L1081.2 127.8 L1078 130.7 Z' fill='#2e3436'/>
<text x='1086.90' y='131.00' font-size='8.85' fill='#1a1a1a' textLength='59.70' lengthAdjust='spacingAndGlyphs' stroke='#1a1a1a' stroke-width='0.08'>Channel Models</text>
<path d='M1078 140.1 L1081.2 143.0 L1078 145.9 Z' fill='#2e3436'/>
<text x='1086.90' y='146.00' font-size='8.85' fill='#1a1a1a' textLength='26.41' lengthAdjust='spacingAndGlyphs' stroke='#1a1a1a' stroke-width='0.08'>Coding</text>
<path d='M1078 155.3 L1081.2 158.2 L1078 161.2 Z' fill='#2e3436'/>
<text x='1086.90' y='161.00' font-size='8.85' fill='#1a1a1a' textLength='45.31' lengthAdjust='spacingAndGlyphs' stroke='#1a1a1a' stroke-width='0.08'>Control Port</text>
<path d='M1078 170.6 L1081.2 173.5 L1078 176.4 Z' fill='#2e3436'/>
<text x='1086.90' y='176.00' font-size='8.85' fill='#1a1a1a' textLength='46.65' lengthAdjust='spacingAndGlyphs' stroke='#1a1a1a' stroke-width='0.08'>Debug Tools</text>
<path d='M1078 185.8 L1081.2 188.7 L1078 191.6 Z' fill='#2e3436'/>
<text x='1086.90' y='192.00' font-size='8.85' fill='#1a1a1a' textLength='43.19' lengthAdjust='spacingAndGlyphs' stroke='#1a1a1a' stroke-width='0.08'>Deprecated</text>
<path d='M1078 201.0 L1081.2 203.9 L1078 206.8 Z' fill='#2e3436'/>
<text x='1086.90' y='207.00' font-size='8.85' fill='#1a1a1a' textLength='62.96' lengthAdjust='spacingAndGlyphs' stroke='#1a1a1a' stroke-width='0.08'>Digital Television</text>
<path d='M1078 216.2 L1081.2 219.2 L1078 222.1 Z' fill='#2e3436'/>
<text x='1086.90' y='222.00' font-size='8.85' fill='#1a1a1a' textLength='37.86' lengthAdjust='spacingAndGlyphs' stroke='#1a1a1a' stroke-width='0.08'>Equalizers</text>
<path d='M1078 231.5 L1081.2 234.4 L1078 237.3 Z' fill='#2e3436'/>
<text x='1086.90' y='237.00' font-size='8.85' fill='#1a1a1a' textLength='47.42' lengthAdjust='spacingAndGlyphs' stroke='#1a1a1a' stroke-width='0.08'>Error Coding</text>
<path d='M1078 246.7 L1081.2 249.6 L1078 252.5 Z' fill='#2e3436'/>
<text x='1086.90' y='252.00' font-size='8.85' fill='#1a1a1a' textLength='52.54' lengthAdjust='spacingAndGlyphs' stroke='#1a1a1a' stroke-width='0.08'>File Operators</text>
<path d='M1078 261.9 L1081.2 264.8 L1078 267.7 Z' fill='#2e3436'/>
<text x='1086.90' y='268.00' font-size='8.85' fill='#1a1a1a' textLength='22.53' lengthAdjust='spacingAndGlyphs' stroke='#1a1a1a' stroke-width='0.08'>Filters</text>
<path d='M1078 277.2 L1081.2 280.1 L1078 282.9 Z' fill='#2e3436'/>
<text x='1086.90' y='283.00' font-size='8.85' fill='#1a1a1a' textLength='58.87' lengthAdjust='spacingAndGlyphs' stroke='#1a1a1a' stroke-width='0.08'>Fourier Analysis</text>
<path d='M1078 292.4 L1081.2 295.3 L1078 298.2 Z' fill='#2e3436'/>
<text x='1086.90' y='298.00' font-size='8.85' fill='#1a1a1a' textLength='46.45' lengthAdjust='spacingAndGlyphs' stroke='#1a1a1a' stroke-width='0.08'>GUI Widgets</text>
<path d='M1078 307.6 L1081.2 310.5 L1078 313.4 Z' fill='#2e3436'/>
<text x='1086.90' y='313.00' font-size='8.85' fill='#1a1a1a' textLength='73.37' lengthAdjust='spacingAndGlyphs' stroke='#1a1a1a' stroke-width='0.08'>Impairment Models</text>
<path d='M1078 322.8 L1081.2 325.7 L1078 328.6 Z' fill='#2e3436'/>
<text x='1086.90' y='329.00' font-size='8.85' fill='#1a1a1a' textLength='60.90' lengthAdjust='spacingAndGlyphs' stroke='#1a1a1a' stroke-width='0.08'>Instrumentation</text>
<path d='M1078 338.1 L1081.2 341.0 L1078 343.9 Z' fill='#2e3436'/>
<text x='1086.90' y='344.00' font-size='8.85' fill='#1a1a1a' textLength='62.28' lengthAdjust='spacingAndGlyphs' stroke='#1a1a1a' stroke-width='0.08'>Level Controllers</text>
<path d='M1078 353.3 L1081.2 356.2 L1078 359.1 Z' fill='#2e3436'/>
<text x='1086.90' y='359.00' font-size='8.85' fill='#1a1a1a' textLength='59.24' lengthAdjust='spacingAndGlyphs' stroke='#1a1a1a' stroke-width='0.08'>Math Operators</text>
<path d='M1078 368.5 L1081.2 371.4 L1078 374.3 Z' fill='#2e3436'/>
<text x='1086.90' y='374.00' font-size='8.85' fill='#1a1a1a' textLength='73.84' lengthAdjust='spacingAndGlyphs' stroke='#1a1a1a' stroke-width='0.08'>Measurement Tools</text>
<path d='M1078 383.7 L1081.2 386.6 L1078 389.5 Z' fill='#2e3436'/>
<text x='1086.90' y='390.00' font-size='8.85' fill='#1a1a1a' textLength='54.76' lengthAdjust='spacingAndGlyphs' stroke='#1a1a1a' stroke-width='0.08'>Message Tools</text>
<path d='M1078 399.0 L1081.2 401.9 L1078 404.8 Z' fill='#2e3436'/>
<text x='1086.90' y='405.00' font-size='8.85' fill='#1a1a1a' textLength='16.78' lengthAdjust='spacingAndGlyphs' stroke='#1a1a1a' stroke-width='0.08'>Misc</text>
<path d='M1078 414.2 L1081.2 417.1 L1078 420.0 Z' fill='#2e3436'/>
<text x='1086.90' y='420.00' font-size='8.85' fill='#1a1a1a' textLength='42.83' lengthAdjust='spacingAndGlyphs' stroke='#1a1a1a' stroke-width='0.08'>Modulators</text>
<path d='M1078 429.4 L1081.2 432.3 L1078 435.2 Z' fill='#2e3436'/>
<text x='1086.90' y='435.00' font-size='8.85' fill='#1a1a1a' textLength='65.39' lengthAdjust='spacingAndGlyphs' stroke='#1a1a1a' stroke-width='0.08'>Networking Tools</text>
<path d='M1078 444.6 L1081.2 447.5 L1078 450.4 Z' fill='#2e3436'/>
<text x='1086.90' y='450.00' font-size='8.85' fill='#1a1a1a' textLength='23.20' lengthAdjust='spacingAndGlyphs' stroke='#1a1a1a' stroke-width='0.08'>OFDM</text>
<path d='M1078 459.9 L1081.2 462.8 L1078 465.6 Z' fill='#2e3436'/>
<text x='1086.90' y='466.00' font-size='8.85' fill='#1a1a1a' textLength='64.44' lengthAdjust='spacingAndGlyphs' stroke='#1a1a1a' stroke-width='0.08'>Packet Operators</text>
<path d='M1078 475.1 L1081.2 478.0 L1078 480.9 Z' fill='#2e3436'/>
<text x='1086.90' y='481.00' font-size='8.85' fill='#1a1a1a' textLength='55.94' lengthAdjust='spacingAndGlyphs' stroke='#1a1a1a' stroke-width='0.08'>Peak Detectors</text>
<path d='M1078 490.3 L1081.2 493.2 L1078 496.1 Z' fill='#2e3436'/>
<text x='1086.90' y='496.00' font-size='8.85' fill='#1a1a1a' textLength='43.37' lengthAdjust='spacingAndGlyphs' stroke='#1a1a1a' stroke-width='0.08'>Resamplers</text>
<path d='M1078 505.5 L1081.2 508.4 L1078 511.3 Z' fill='#2e3436'/>
<text x='1086.90' y='511.00' font-size='8.85' fill='#1a1a1a' textLength='66.64' lengthAdjust='spacingAndGlyphs' stroke='#1a1a1a' stroke-width='0.08'>Stream Operators</text>
<path d='M1078 520.8 L1081.2 523.6 L1078 526.5 Z' fill='#2e3436'/>
<text x='1086.90' y='527.00' font-size='8.85' fill='#1a1a1a' textLength='64.29' lengthAdjust='spacingAndGlyphs' stroke='#1a1a1a' stroke-width='0.08'>Stream Tag Tools</text>
<path d='M1078 536.0 L1081.2 538.9 L1078 541.8 Z' fill='#2e3436'/>
<text x='1086.90' y='542.00' font-size='8.85' fill='#1a1a1a' textLength='55.89' lengthAdjust='spacingAndGlyphs' stroke='#1a1a1a' stroke-width='0.08'>Symbol Coding</text>
<path d='M1078 551.2 L1081.2 554.1 L1078 557.0 Z' fill='#2e3436'/>
<text x='1086.90' y='557.00' font-size='8.85' fill='#1a1a1a' textLength='52.10' lengthAdjust='spacingAndGlyphs' stroke='#1a1a1a' stroke-width='0.08'>Synchronizers</text>
<path d='M1078 566.4 L1081.2 569.3 L1078 572.2 Z' fill='#2e3436'/>
<text x='1086.90' y='572.00' font-size='8.85' fill='#1a1a1a' textLength='50.47' lengthAdjust='spacingAndGlyphs' stroke='#1a1a1a' stroke-width='0.08'>Trellis Coding</text>
<path d='M1078 581.6 L1081.2 584.5 L1078 587.4 Z' fill='#2e3436'/>
<text x='1086.90' y='587.00' font-size='8.85' fill='#1a1a1a' textLength='60.53' lengthAdjust='spacingAndGlyphs' stroke='#1a1a1a' stroke-width='0.08'>Type Converters</text>
<path d='M1078 596.9 L1081.2 599.8 L1078 602.7 Z' fill='#2e3436'/>
<text x='1086.90' y='603.00' font-size='8.85' fill='#1a1a1a' textLength='17.40' lengthAdjust='spacingAndGlyphs' stroke='#1a1a1a' stroke-width='0.08'>UHD</text>
<path d='M1078 612.1 L1081.2 615.0 L1078 617.9 Z' fill='#2e3436'/>
<text x='1086.90' y='618.00' font-size='8.85' fill='#1a1a1a' textLength='34.04' lengthAdjust='spacingAndGlyphs' stroke='#1a1a1a' stroke-width='0.08'>Variables</text>
<path d='M1078 627.3 L1081.2 630.2 L1078 633.1 Z' fill='#2e3436'/>
<text x='1086.90' y='633.00' font-size='8.85' fill='#1a1a1a' textLength='20.87' lengthAdjust='spacingAndGlyphs' stroke='#1a1a1a' stroke-width='0.08'>Video</text>
<path d='M1078 642.5 L1081.2 645.4 L1078 648.3 Z' fill='#2e3436'/>
<text x='1086.90' y='648.00' font-size='8.85' fill='#1a1a1a' textLength='82.37' lengthAdjust='spacingAndGlyphs' stroke='#1a1a1a' stroke-width='0.08'>Waveform Generators</text>
<path d='M1078 657.8 L1081.2 660.7 L1078 663.6 Z' fill='#2e3436'/>
<text x='1086.90' y='664.00' font-size='8.85' fill='#1a1a1a' textLength='69.72' lengthAdjust='spacingAndGlyphs' stroke='#1a1a1a' stroke-width='0.08'>ZeroMQ Interfaces</text>
<path d='M1066 672.9 L1069.2 675.8 L1066 678.7 Z' fill='#2e3436'/>
<text x='1074.80' y='679.00' font-size='8.85' fill='#1a1a1a' textLength='79.91' lengthAdjust='spacingAndGlyphs' stroke='#1a1a1a' stroke-width='0.08'>(no module specified)</text>
<g id="toolbar">
<defs>
<linearGradient id="gfold" x1="0" y1="0" x2="0" y2="1"><stop offset="0" stop-color="#c4a26e"/><stop offset="1" stop-color="#ad8a58"/></linearGradient>
<linearGradient id="gfront" x1="0" y1="0" x2="0" y2="1"><stop offset="0" stop-color="#efd9ad"/><stop offset="1" stop-color="#d9bb86"/></linearGradient>
<linearGradient id="gsave" x1="0" y1="0" x2="0" y2="1"><stop offset="0" stop-color="#a8c4ec"/><stop offset="1" stop-color="#7ea4dc"/></linearGradient>
<linearGradient id="gblue" x1="0" y1="0" x2="0" y2="1"><stop offset="0" stop-color="#5a86cc"/><stop offset="1" stop-color="#2a5aa8"/></linearGradient>
</defs>
<!-- new doc -->
<path d="M81.8 23.6 H88.6 L91.4 26.4 V37.3 H81.8 Z" fill="#fff" stroke="#bfc3bb" stroke-width="1"/>
<path d="M88.4 23.6 V26.6 H91.4" fill="#eee" stroke="#c8ccc4" stroke-width="0.7"/>
<circle cx="91.6" cy="29.6" r="2.8" fill="#1f53a6"/>
<path d="M91.6 27.9 V31.3 M89.9 29.6 H93.3" stroke="#fff" stroke-width="0.9"/>
<path d="M106.9 28.9 H113.4 L110.15 32.3 Z" fill="#000"/>
<!-- open folder -->
<path d="M128.5 24 H132.6 L133.6 25.2 H141.4 V36.4 H128.5 Z" fill="url(#gfold)" stroke="#a88654" stroke-width="0.6"/>
<rect x="130.6" y="26" width="8.8" height="7" fill="#f2f2f0" stroke="#c0c0bc" stroke-width="0.5"/>
<path d="M128.2 31.8 H142 V36.8 H128.2 Z" fill="url(#gfront)" stroke="#b89868" stroke-width="0.6"/>
<path d="M155.3 28.5 H162 L158.65 32.6 Z" fill="#000"/>
<!-- save -->
<path d="M177.4 25 Q177.4 23.2 179.2 23.2 H186.8 Q188.6 23.2 188.6 25 V36.5 H177.4 Z" fill="url(#gsave)" stroke="#7494c6" stroke-width="0.6"/>
<path d="M183 24.8 V30.4 M180.7 28.3 L183 30.6 L185.3 28.3" stroke="#fff" stroke-width="1.5" fill="none"/>
<rect x="180" y="32.6" width="6" height="2.4" fill="#e9eef8" stroke="#9fb6dc" stroke-width="0.4"/>
<!-- close -->
<path d="M203.6 26.4 L211.6 34.4 M211.6 26.4 L203.6 34.4" stroke="#6e706c" stroke-width="3" stroke-linecap="round"/>
<path d="M203.6 26.4 L211.6 34.4 M211.6 26.4 L203.6 34.4" stroke="#8a8c88" stroke-width="1.2" stroke-linecap="round"/>
<!-- edit -->
<rect x="234.5" y="23.5" width="12" height="13.8" fill="#fff" stroke="#9a9a9a" stroke-width="0.8"/>
<rect x="234.2" y="23.2" width="12.6" height="3.2" fill="#a8a8a8"/>
<rect x="234.2" y="36.4" width="12.6" height="1.3" fill="#2a2a2a"/>
<path d="M236.4 29 H241 M236.4 31 H240 M236.4 33 H239" stroke="#d8d8d8" stroke-width="0.6"/>
<path d="M238.2 35 L246.4 26.8 L248.2 28.6 L240 36.8 L237.6 37.2 Z" fill="#f2a43a" stroke="#c07818" stroke-width="0.5"/>
<path d="M238.2 35 L237.6 37.2 L240 36.8 Z" fill="#3a2a1a"/>
<circle cx="247.6" cy="26.2" r="1.5" fill="#e03838"/>
<!-- screen -->
<rect x="258.6" y="23.4" width="14" height="13.4" rx="2" fill="#e8e8e6" stroke="#8a8a8a" stroke-width="1"/>
<rect x="260.2" y="25.6" width="11" height="1" fill="#707070"/>
<rect x="271" y="25.4" width="1.2" height="1.2" fill="#f0a040"/>
<rect x="261.6" y="26.8" width="8.8" height="5.4" fill="#fff"/>
<rect x="260" y="34.4" width="11.2" height="0.8" fill="#c8c8c8"/>
<!-- scissors -->
<path d="M295.6 23.2 L300.6 31.4 L301.8 30.6 Z M304.7 23.2 L299.7 31.4 L298.5 30.6 Z" fill="#fff" stroke="#b0b0b0" stroke-width="0.7"/>
<circle cx="296.9" cy="34.3" r="2.3" fill="#fff" stroke="#e26a78" stroke-width="1.7"/>
<circle cx="303.3" cy="34.3" r="2.3" fill="#fff" stroke="#e26a78" stroke-width="1.7"/>
<!-- copy -->
<rect x="317.3" y="24.3" width="8" height="7.8" fill="#f8f8f8" stroke="#bdbdbd" stroke-width="0.8"/>
<path d="M318.8 26.4 H323.6 M318.8 28 H323.6 M318.8 29.6 H322.4" stroke="#d0d0d0" stroke-width="0.7"/>
<rect x="322.3" y="28.2" width="8.6" height="8.4" fill="#f8f8f8" stroke="#bdbdbd" stroke-width="0.8"/>
<path d="M323.8 30.4 H329.2 M323.8 32 H329.2 M323.8 33.6 H328" stroke="#d0d0d0" stroke-width="0.7"/>
<!-- paste -->
<rect x="342.4" y="25" width="11.4" height="11.4" rx="1.2" fill="#eccc9a" stroke="#d0ac74" stroke-width="0.6"/>
<path d="M345.2 26.4 L346 24.2 H350.2 L351 26.4 Z" fill="#d8d8d8" stroke="#a8a8a8" stroke-width="0.5"/>
<rect x="347.8" y="28.8" width="8" height="7.8" fill="#fff" stroke="#b8b8b8" stroke-width="0.7"/>
<path d="M349.2 31 H354.2 M349.2 32.6 H354.2 M349.2 34.2 H353" stroke="#d4d4d4" stroke-width="0.7"/>
<!-- delete -->
<circle cx="372.8" cy="30.3" r="5.7" fill="#fff" stroke="#e36b73" stroke-width="1.9"/>
<path d="M370.7 28.2 L374.9 32.4 M374.9 28.2 L370.7 32.4" stroke="#6a6a6a" stroke-width="1.3"/>
<!-- undo -->
<path d="M404.6 28.5 H407.6 A3.4 3.4 0 0 1 409.4 34.6" stroke="#e8d478" stroke-width="3.2" fill="none"/>
<path d="M404.6 28.5 H407.6 A3.4 3.4 0 0 1 409.4 34.6" stroke="#f8f0b8" stroke-width="1.4" fill="none"/>
<path d="M399.6 28.5 L405.4 24 V33 Z" fill="#efe098" stroke="#e0c868" stroke-width="0.6"/>
<!-- redo -->
<path d="M433 28.5 H430 A3.4 3.4 0 0 0 428.2 34.6" stroke="#98cc68" stroke-width="3.2" fill="none"/>
<path d="M433 28.5 H430 A3.4 3.4 0 0 0 428.2 34.6" stroke="#d0f0b0" stroke-width="1.4" fill="none"/>
<path d="M438 28.5 L432.2 24 V33 Z" fill="#b8e090" stroke="#90c060" stroke-width="0.6"/>
<!-- red minus -->
<circle cx="464.7" cy="30.4" r="6.5" fill="#e87a7e"/>
<rect x="460.8" y="29.1" width="7.7" height="2.2" fill="#fff"/>
<!-- generate -->
<rect x="484" y="23.8" width="9.2" height="8.9" rx="1.2" fill="url(#gblue)" stroke="#24488a" stroke-width="0.5"/>
<rect x="484.6" y="24.4" width="8" height="1.8" fill="#8aaee6"/>
<path d="M485.8 32.7 H491.4 L488.6 36.9 Z" fill="#f08a20"/>
<!-- play -->
<path d="M509.2 25.6 L518 30.6 L509.2 35.6 Z" fill="#fff" stroke="#9a9a9a" stroke-width="0.9"/>
<path d="M509.2 25.6 V35.6" stroke="#707070" stroke-width="0.9"/>
<!-- stop -->
<rect x="534.2" y="26.4" width="7.6" height="8" rx="0.8" fill="#f2f2f0" stroke="#c4c4c4" stroke-width="0.9"/>
<!-- rotate ccw -->
<path d="M578 25.6 C573 25.6 570.6 27.2 570.6 31.6" stroke="#f0c088" stroke-width="2.8" fill="none"/>
<path d="M578 25.6 C573 25.6 570.6 27.2 570.6 31.6" stroke="#fae0c0" stroke-width="1" fill="none"/>
<path d="M566.4 31.2 H574.6 L570.5 37.1 Z" fill="#f6c890" stroke="#eaa86a" stroke-width="0.5"/>
<!-- rotate cw -->
<path d="M590 25.6 C595 25.6 597.6 27.2 597.6 31.6" stroke="#f0c088" stroke-width="2.8" fill="none"/>
<path d="M590 25.6 C595 25.6 597.6 27.2 597.6 31.6" stroke="#fae0c0" stroke-width="1" fill="none"/>
<path d="M593.8 31.2 H602 L597.9 37.1 Z" fill="#f6c890" stroke="#eaa86a" stroke-width="0.5"/>
<!-- zoom in -->
<rect x="626.4" y="24.4" width="10" height="9.4" rx="0.8" fill="#fff" stroke="#b4b4b4" stroke-width="0.8"/>
<circle cx="631.6" cy="28.4" r="1.4" fill="none" stroke="#b0b0b0" stroke-width="0.8"/>
<path d="M624.8 35.6 L631 29.6" stroke="#86b2e8" stroke-width="2"/>
<!-- zoom 2 -->
<rect x="650.6" y="23.3" width="11.2" height="10.4" rx="0.8" fill="#fff" stroke="#b4b4b4" stroke-width="0.8"/>
<rect x="653.8" y="26.4" width="5" height="4" fill="#4a4a38"/>
<rect x="650.2" y="30.2" width="4" height="4.2" fill="#fff" stroke="#b0b0b0" stroke-width="0.6"/>
<path d="M647.8 37.1 L652.8 32.6" stroke="#86b2e8" stroke-width="2"/>
<!-- ffw -->
<path d="M673.4 27 L679 30.6 L673.4 34.2 Z M679 27 L684.6 30.6 L679 34.2 Z" fill="#fafafa" stroke="#c4c4c4" stroke-width="0.8"/>
<!-- triangle box -->
<path d="M696.6 24.8 H710.4 V33.4 L707.2 36.4 H696.6 Z" fill="#fafafa" stroke="#c4c4c4" stroke-width="0.8"/>
<path d="M707.2 36.4 V33.4 H710.4" fill="#e8e8e8" stroke="#c4c4c4" stroke-width="0.6"/>
<path d="M703.5 28 L705.8 32.6 H701.2 Z" fill="#a0a0a0"/>
<!-- find -->
<circle cx="736" cy="29.3" r="4.8" fill="#f4f6fa" stroke="#2040a0" stroke-width="2.1"/>
<path d="M739.6 33 L743.4 36.6" stroke="#1a1a1a" stroke-width="2.6" stroke-linecap="round"/>
<!-- refresh -->
<path d="M766 27.4 A5.2 5.2 0 1 0 766.6 33" stroke="#b0b0b0" stroke-width="3.2" fill="none"/>
<path d="M766 27.4 A5.2 5.2 0 1 0 766.6 33" stroke="#fbfbfb" stroke-width="1.8" fill="none"/>
<path d="M768 23.8 V29.6 H762.4 Z" fill="#fbfbfb" stroke="#b0b0b0" stroke-width="0.8"/>
<!-- arrows -->
<circle cx="781.8" cy="26" r="1.4" fill="#fafafa" stroke="#c8c8c8" stroke-width="0.6"/>
<circle cx="785.6" cy="25" r="1.4" fill="#fafafa" stroke="#c8c8c8" stroke-width="0.6"/>
<circle cx="787.2" cy="28.4" r="1.4" fill="#fafafa" stroke="#c8c8c8" stroke-width="0.6"/>
<path d="M782.4 31 L786.2 34.6 L790 31 M782.4 33.2 L786.2 36.6 L790 33.2" stroke="#c8c8c8" stroke-width="1.2" fill="none"/>
</g>

</svg>
</body></html>
